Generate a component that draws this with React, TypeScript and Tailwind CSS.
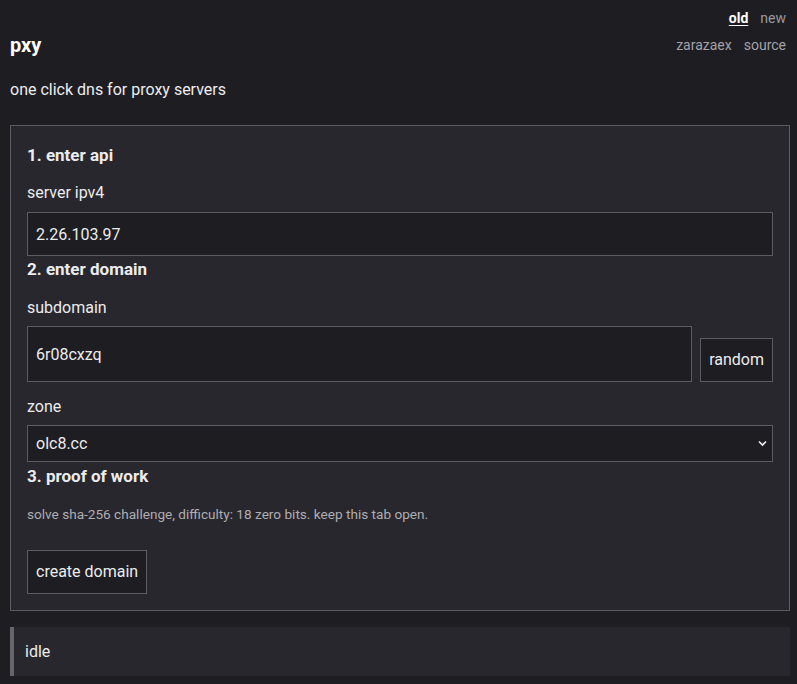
import React from 'react';

const inputCls =
  'w-full bg-[#1e1d22] border border-[#5c5b62] text-[#ececee] text-base px-2 outline-none';

const App: React.FC = () => {
  return (
    <div className="min-h-[684px] bg-[#1e1d22] text-[#ececee] font-['Roboto',sans-serif] pl-[10px] pr-[7px] pt-[8px] pb-2">
      <nav className="flex justify-end gap-3 pr-[4px] text-sm leading-5">
        <a className="font-bold text-white underline underline-offset-2">old</a>
        <a className="text-[#9a999f]">new</a>
      </nav>

      <header className="mt-[3px] flex items-center justify-between pr-[4px]">
        <h1 className="text-xl leading-7 font-bold text-white">pxy</h1>
        <div className="flex gap-3 text-sm text-[#a3a2a8]">
          <a>zarazaex</a>
          <a>source</a>
        </div>
      </header>

      <p className="mt-[19px] text-base leading-6">one click dns for proxy servers</p>

      <section className="mt-[23px] border border-[#5c5b62] bg-[#28272d] px-4 pt-[17px] pb-4">
        <h2 className="text-[17px] leading-6 font-bold">1. enter api</h2>
        <label className="mt-[14px] block text-base leading-6">server ipv4</label>
        <input className={`${inputCls} mt-[7px] h-[44px]`} defaultValue="2.26.103.97" />

        <h2 className="mt-[1px] text-[17px] leading-6 font-bold">2. enter domain</h2>
        <label className="mt-[15px] block text-base leading-6">subdomain</label>
        <div className="mt-[6px] flex items-end gap-2">
          <input className={`${inputCls} h-[56px] flex-1`} defaultValue="6r08cxzq" />
          <button className="h-[44px] border border-[#5c5b62] bg-[#1e1d22] px-2 text-base">random</button>
        </div>

        <label className="mt-[13px] block text-base leading-6">zone</label>
        <div className="relative mt-[6px]">
          <select className={`${inputCls} h-[37px] appearance-none`} defaultValue="olc8.cc">
            <option>olc8.cc</option>
          </select>
          <svg
            className="pointer-events-none absolute right-[6px] top-[15px]"
            width="9"
            height="7"
            viewBox="0 0 9 7"
            fill="none"
          >
            <path d="M1 1.5 L4.5 5 L8 1.5" stroke="#f2f2f4" strokeWidth="1.6" />
          </svg>
        </div>

        <h2 className="mt-[2px] text-[17px] leading-6 font-bold">3. proof of work</h2>
        <p className="mt-[17px] text-[13.6px] leading-[18px] text-[#aeadb2]">
          solve sha-256 challenge, difficulty: 18 zero bits. keep this tab open.
        </p>
        <button className="mt-[27px] h-[44px] border border-[#5c5b62] bg-[#1e1d22] px-2 text-base">
          create domain
        </button>
      </section>

      <div className="mt-4 flex h-[49px] items-center border-l-4 border-[#66656b] bg-[#28272d] pl-[11px] text-base">
        idle
      </div>
    </div>
  );
};

export default App;
